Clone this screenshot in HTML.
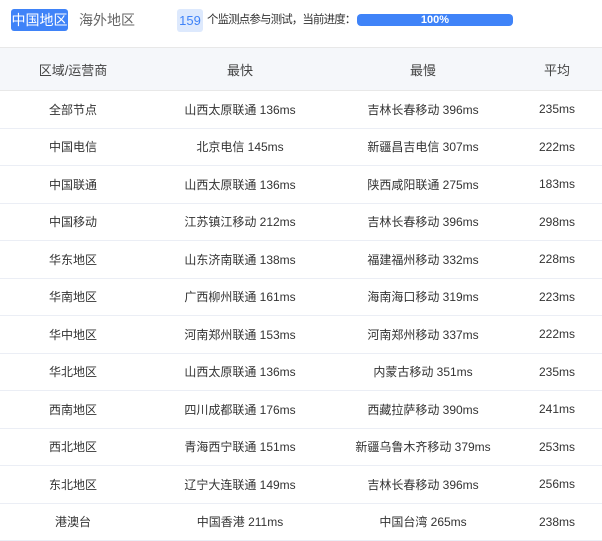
<!DOCTYPE html><html><head><meta charset="utf-8"><style>
body{margin:0;width:602px;height:541px;background:#fff;font-family:"Liberation Sans","Noto Sans CJK SC",sans-serif;color:#333;overflow:hidden;position:relative}
.tab{position:absolute;top:9px;height:22px;line-height:22px;font-size:14px;white-space:nowrap}
.t1{left:11px;width:57px;background:#3f83f8;color:#fff;border-radius:3px;text-align:center}
.t2{left:79px;color:#666}
.badge{position:absolute;left:177px;top:9px;width:26px;height:23px;line-height:23px;background:#dde9fd;color:#3f83f8;font-size:13px;text-align:center;border-radius:3px}
.info{position:absolute;left:207px;top:9px;line-height:23px;font-size:11.5px;letter-spacing:-0.9px;color:#333;white-space:nowrap}
.bar{position:absolute;left:357px;top:14px;width:156px;height:12px;border-radius:4px;background:#3f83f8;color:#fff;font-size:11px;line-height:12px;text-align:center;font-weight:bold}
table{position:absolute;top:47px;left:0;width:602px;border-collapse:collapse;table-layout:fixed}
th{height:40px;background:#f5f7fa;font-weight:normal;font-size:13px;color:#444;border-top:1px solid #e8e8e8;border-bottom:1px solid #e8e8e8}
td{height:36.5px;padding:0;text-align:center;font-size:12px;color:#333;border-bottom:1px solid #ebeef5}
</style></head><body>
<div class="tab t1">中国地区</div><div class="tab t2">海外地区</div>
<div class="badge">159</div><div class="info">个监测点参与测试，当前进度：</div>
<div class="bar">100%</div>
<table><colgroup><col style="width:146px"><col style="width:188px"><col style="width:178px"><col style="width:90px"></colgroup>
<tr><th>区域/运营商</th><th>最快</th><th>最慢</th><th>平均</th></tr>
<tr><td>全部节点</td><td>山西太原联通 136ms</td><td>吉林长春移动 396ms</td><td>235ms</td></tr>
<tr><td>中国电信</td><td>北京电信 145ms</td><td>新疆昌吉电信 307ms</td><td>222ms</td></tr>
<tr><td>中国联通</td><td>山西太原联通 136ms</td><td>陕西咸阳联通 275ms</td><td>183ms</td></tr>
<tr><td>中国移动</td><td>江苏镇江移动 212ms</td><td>吉林长春移动 396ms</td><td>298ms</td></tr>
<tr><td>华东地区</td><td>山东济南联通 138ms</td><td>福建福州移动 332ms</td><td>228ms</td></tr>
<tr><td>华南地区</td><td>广西柳州联通 161ms</td><td>海南海口移动 319ms</td><td>223ms</td></tr>
<tr><td>华中地区</td><td>河南郑州联通 153ms</td><td>河南郑州移动 337ms</td><td>222ms</td></tr>
<tr><td>华北地区</td><td>山西太原联通 136ms</td><td>内蒙古移动 351ms</td><td>235ms</td></tr>
<tr><td>西南地区</td><td>四川成都联通 176ms</td><td>西藏拉萨移动 390ms</td><td>241ms</td></tr>
<tr><td>西北地区</td><td>青海西宁联通 151ms</td><td>新疆乌鲁木齐移动 379ms</td><td>253ms</td></tr>
<tr><td>东北地区</td><td>辽宁大连联通 149ms</td><td>吉林长春移动 396ms</td><td>256ms</td></tr>
<tr><td>港澳台</td><td>中国香港 211ms</td><td>中国台湾 265ms</td><td>238ms</td></tr>
</table></body></html>
